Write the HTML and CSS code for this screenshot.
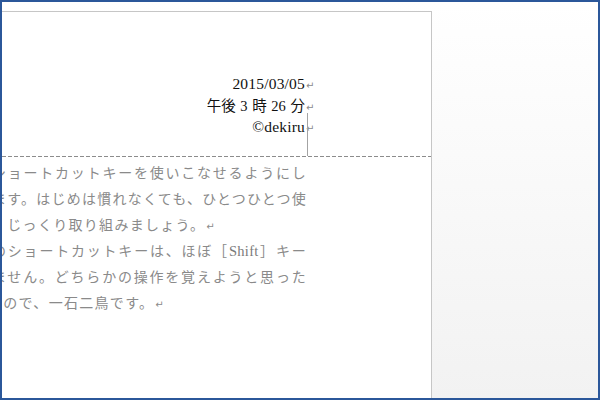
FILE: index.html
```html
<!DOCTYPE html>
<html lang="ja">
<head>
<meta charset="utf-8">
<title>dekiru</title>
<link rel="stylesheet" href="styles.css">
</head>
<body>
<div class="window">
  <div class="page">
    <div class="header">
      <div class="hcol">
        <div class="hline">2015/03/05<span class="pm">↵</span></div>
        <div class="hline"><span class="jp">午後 3 時 26 分</span><span class="pm">↵</span></div>
        <div class="hline">©dekiru<span class="pm">↵</span></div>
      </div>
      <div class="corner"></div>
    </div>
    <div class="sep"></div>
    <div class="bcol">
      <p class="ln full">ショートカットキーを使いこなせるようにし</p>
      <p class="ln full">ます。はじめは慣れなくても、ひとつひとつ使</p>
      <p class="ln">、じっくり取り組みましょう。<span class="pm">↵</span></p>
      <p class="ln full">のショートカットキーは、ほぼ［<span class="lat">Shift</span>］キー</p>
      <p class="ln full">ません。どちらかの操作を覚えようと思った</p>
      <p class="ln last">るので、一石二鳥です。<span class="pm">↵</span></p>
    </div>
  </div>
</div>
</body>
</html>
```

FILE: styles.css
```css
html, body {
  margin: 0;
  padding: 0;
}

.window {
  width: 600px;
  height: 400px;
  box-sizing: border-box;
  border: 2px solid #2b579a;
  padding-top: 9px;
  overflow: hidden;
  background: linear-gradient(to bottom, #ffffff 0%, #f2f2f2 100%);
}

.page {
  width: 430px;
  height: 387px;
  box-sizing: border-box;
  background: #ffffff;
  border-top: 1px solid #c6c6c6;
  border-right: 1px solid #c6c6c6;
}

.header {
  position: relative;
  height: 144px;
  box-sizing: border-box;
  padding-top: 62px;
}

.hcol {
  margin-left: -12px;
  width: 315px;
  text-align: right;
  font-family: "Liberation Serif", "Noto Sans CJK JP", serif;
  font-size: 15.5px;
  letter-spacing: 0.2px;
  line-height: 19.5px;
  color: #111111;
}

.hline {
  white-space: nowrap;
}

.jp {
  font-size: 14.5px;
  letter-spacing: 0;
  word-spacing: 1px;
}

.pm {
  display: inline-block;
  width: 0;
  overflow: visible;
  text-indent: 1px;
  font-family: "DejaVu Sans", sans-serif;
  font-size: 10px;
  color: #8a8a8a;
  vertical-align: 0;
  letter-spacing: 0;
}

.corner {
  position: absolute;
  left: 305px;
  bottom: 0;
  width: 1px;
  height: 43px;
  background: #a3a3a3;
}

.sep {
  height: 1px;
  background: repeating-linear-gradient(to right, #8c8c8c 0, #8c8c8c 4px, transparent 4px, transparent 6px);
}

.bcol {
  margin-left: -10px;
  width: 314px;
  padding-top: 2px;
  font-family: "Noto Sans CJK JP", sans-serif;
  font-size: 14px;
  line-height: 26px;
  color: #8a8a8a;
  letter-spacing: 1.3px;
  text-spacing-trim: space-all;
}

.ln {
  margin: 0;
  height: 26px;
  white-space: nowrap;
}

.ln.full {
  letter-spacing: 0.3px;
  white-space: normal;
  text-align: justify;
  text-align-last: justify;
}

.ln.last {
  text-indent: -4px;
}

.ln .pm {
  font-size: 10px;
  text-indent: 1px;
}

.lat {
  font-family: "Liberation Serif", serif;
  font-size: 14.5px;
  color: #7a7a7a;
}
```
